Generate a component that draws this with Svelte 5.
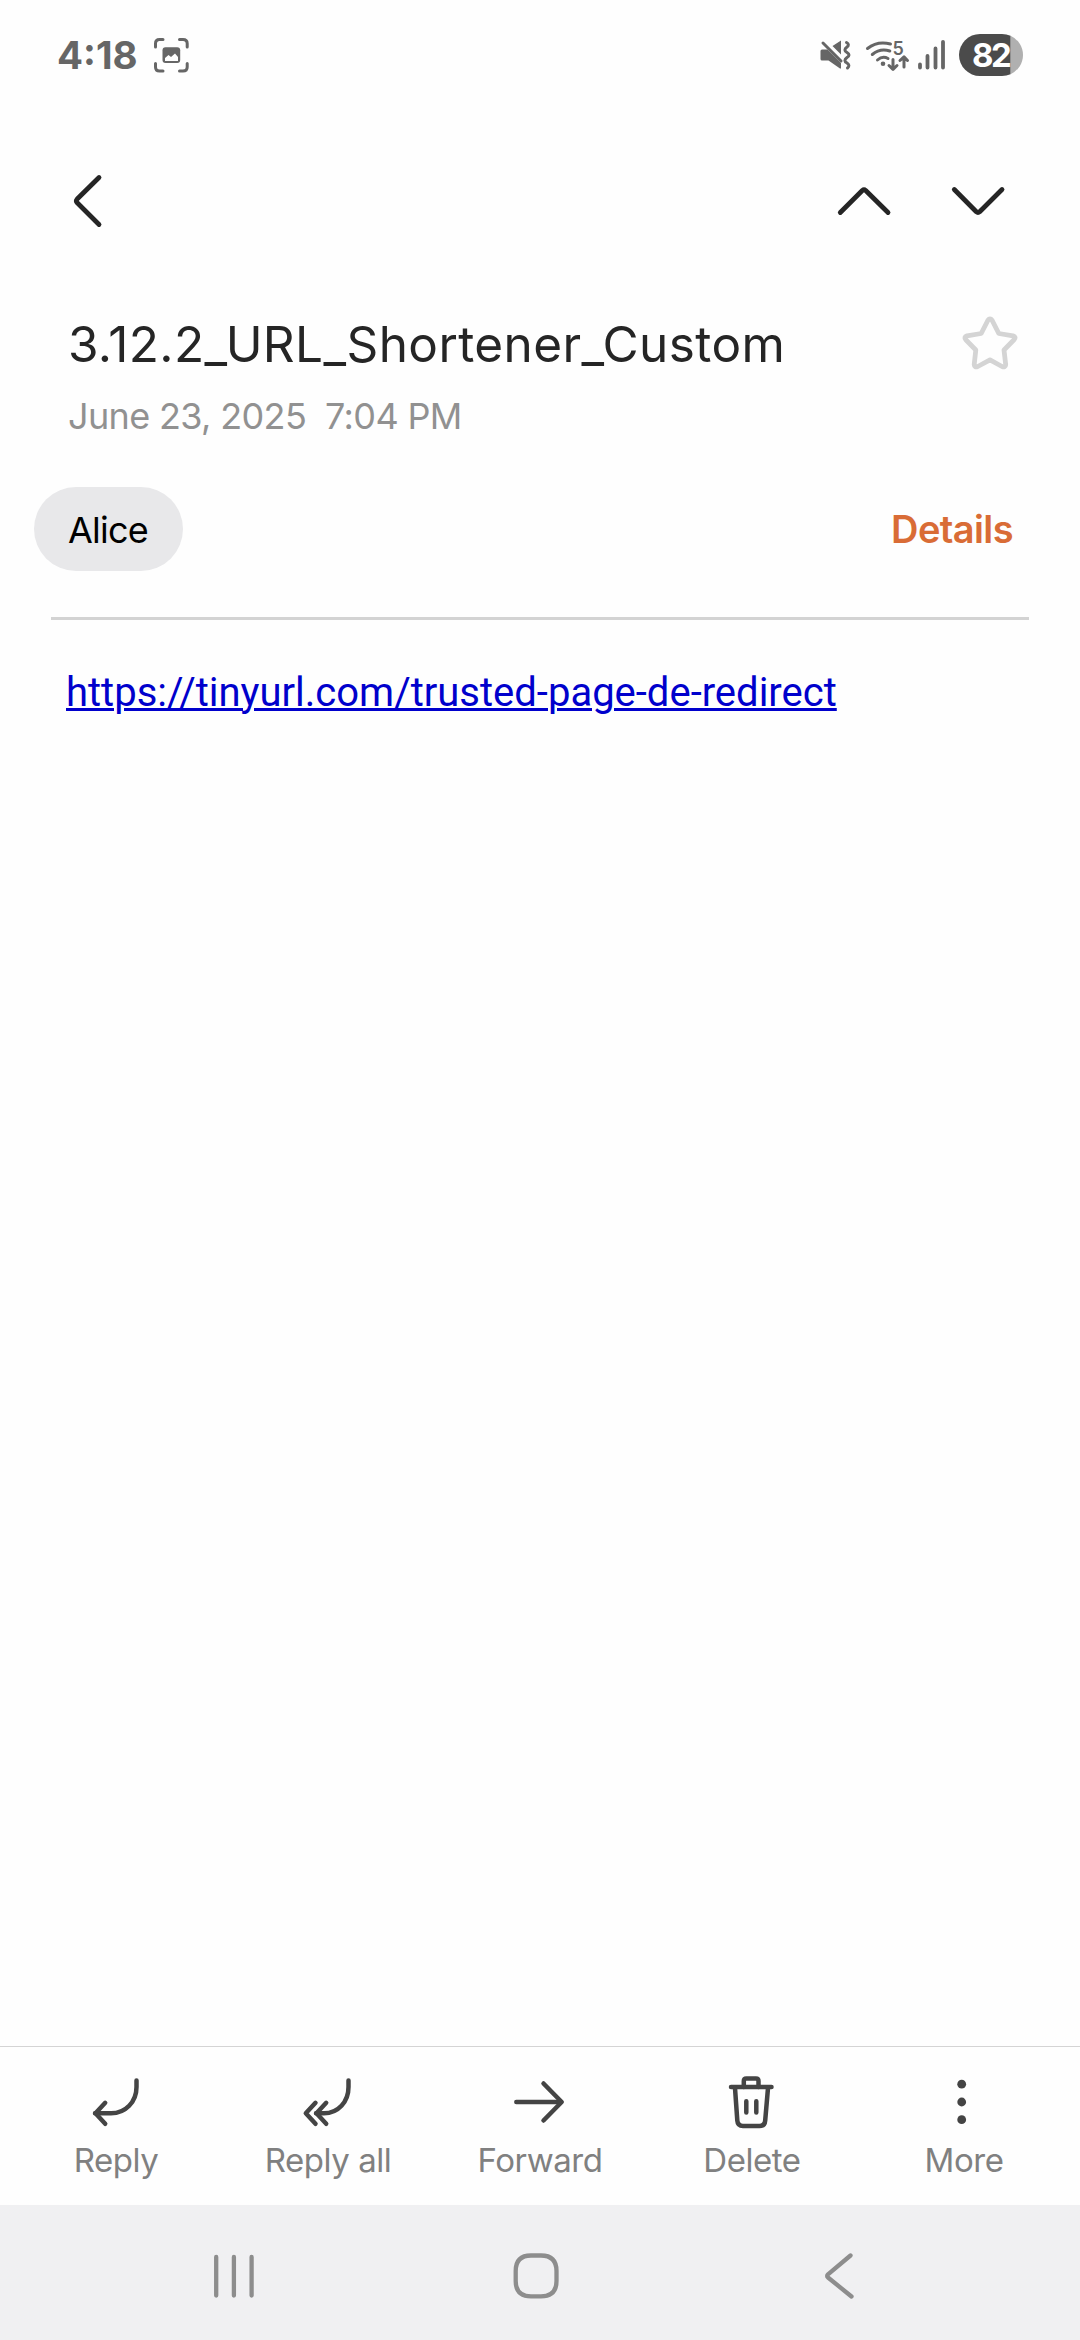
<script>
  const actions = [
    { label: 'Reply', cls: 'reply', strokes: ['M136.5 2080.5V2087C136.5 2102 125.5 2113.3 111 2113.3H95', 'M105.2 2102.8L95.5 2113.3L105.2 2123.8'] },
    { label: 'Reply all', cls: 'reply-all', strokes: ['M348.5 2080.5V2087C348.5 2102 338 2113.3 324 2113.3H316', 'M326.2 2102.8L316.5 2113.3L326.2 2123.8', 'M315.5 2102.8L305.8 2113.3L315.5 2123.8'] },
    { label: 'Forward', cls: 'forward', strokes: ['M516.3 2102H561', 'M543.5 2083.5L561.7 2102L543.5 2120.5'] },
    { label: 'Delete', cls: 'delete', strokes: ['M731 2087H771.5', 'M743.8 2087V2081Q743.8 2078.5 746.3 2078.5H756Q758.5 2078.5 758.5 2081V2087', 'M735 2088L737.3 2120.5Q737.7 2126 743 2126H759.5Q764.8 2126 765.2 2120.5L768 2088', 'M746.3 2101.3V2112.5M756.3 2101.3V2112.5'] },
    { label: 'More', cls: 'more', strokes: [] }
  ];
</script>

<div class="screen">
  <header class="status">
    <span class="time">4:18</span>
    <svg class="capture" viewBox="152 36 40 40" width="40" height="40">
      <path d="M155.5 47V43.5Q155.5 39.5 159.5 39.5H163M179.5 39.5H183Q187.2 39.5 187.2 43.5V47M187.2 63.5V67Q187.2 71 183 71H179.5M163 71H159.5Q155.5 71 155.5 67V63.5" />
      <rect x="162.5" y="47.3" width="17.7" height="15.7" rx="3" class="fill" />
      <path d="M165 61V58L168.5 55L171 57L175 53.5L178 57V61Z" class="hole" />
    </svg>
    <svg class="signals" viewBox="815 30 215 50" width="215" height="50">
      <path class="fill" d="M822 49.5H827.5L841 63V68.5H840L828.5 60.5H822Q820.5 60.5 820.5 59V51Q820.5 49.5 822 49.5ZM832.5 46L841 40.5V54.5Z" />
      <path d="M823 43L841 61" class="thin" />
      <path d="M846.5 42.5Q850 44.5 847 47Q842.8 50 847 52.5Q851 55 847 57.5Q842.8 60.5 847 63Q850.5 65.5 847.5 68" class="thin" />
      <path d="M867.5 48.5Q877.5 40.5 890.5 44M872.3 54.5Q880 48 889.8 51M877.5 60Q882.5 55.5 888 58.5" class="arc" />
      <circle cx="883" cy="63.8" r="2.3" class="fill" />
      <text x="892.5" y="54.5" class="five">5</text>
      <path d="M893 59.5V69M889 65.5L893 69.3L897 65.5M904 67V57M900 60.5L904 56.8L907.5 60.5" class="arc" />
      <path d="M920 64.5V67.5M927.5 56V67.5M935.5 48.5V67.5M943 41.8V67.5" class="bars" />
      <path d="M1010.5 35.8A21 21 0 0 1 1010.5 74.2Z" class="battery-rest" />
      <path d="M980 34H1002Q1006.5 34 1010.5 35.8V74.2Q1006.5 76 1002 76H980A21 21 0 0 1 980 34Z" class="battery" />
      <text x="972" y="67" class="level">82</text>
    </svg>
  </header>

  <nav class="toolbar">
    <svg viewBox="66 171 40 60" width="40" height="60"><path d="M99 177.5L77.2 199Q75.5 201 77.2 202.8L99 224.5" /></svg>
    <div class="pager">
      <svg viewBox="834 181 60 40" width="60" height="40"><path d="M840.3 212.5L862.3 190.5Q864 189 865.7 190.5L888 212.5" /></svg>
      <svg viewBox="948 181 60 40" width="60" height="40"><path d="M954.3 189.5L976.3 211.7Q978 213.2 979.7 211.7L1002 189.5" /></svg>
    </div>
  </nav>

  <section class="heading">
    <div class="titles">
      <h1>3.12.2_URL_Shortener_Custom</h1>
      <p class="date">June 23, 2025&nbsp; 7:04 PM</p>
    </div>
    <svg class="star" viewBox="960 313 60 60" width="60" height="60">
      <path d="M987.8 320.5Q990 317.5 992.2 320.5L998.8 333.5L1013 335.8Q1016.5 337 1014 339.8L1004 350L1005.7 364.5Q1005.5 367.8 1002 366.5L990 359.8L977.8 366.5Q974.3 367.8 974.2 364.5L975.8 350L965.8 339.8Q963.5 337 967 335.8L981.2 333.5Z" />
    </svg>
  </section>

  <section class="people">
    <span class="chip">Alice</span>
    <span class="details">Details</span>
  </section>

  <main><a href="#message">https://tinyurl.com/trusted-page-de-redirect</a></main>

  <footer class="actions">
    {#each actions as action, i}
      <button class={action.cls}>
        <svg viewBox={`${10 + i * 212} 2070 212 64`} width="212" height="64">
          {#each action.strokes as d}<path {d} />{/each}
          {#if action.cls === 'more'}
            <circle cx="961.7" cy="2084.2" r="4.4" />
            <circle cx="961.7" cy="2102" r="4.4" />
            <circle cx="961.7" cy="2119.7" r="4.4" />
          {/if}
        </svg>
        <span>{action.label}</span>
      </button>
    {/each}
  </footer>

  <div class="system">
    <svg viewBox="206 2245 56 62" width="56" height="62"><path d="M216.2 2257V2295.5M233.9 2257V2295.5M251.6 2257V2295.5" /></svg>
    <svg class="home" viewBox="506 2245 60 62" width="60" height="62"><path d="M531 2255.5H541Q556.5 2255.5 556.5 2271V2281Q556.5 2296.3 541 2296.3H531Q515.7 2296.3 515.7 2281V2271Q515.7 2255.5 531 2255.5Z" /></svg>
    <svg viewBox="816 2245 48 62" width="48" height="62"><path d="M850.5 2255.5L828 2274.3Q826.3 2275.9 828 2277.5L851.5 2296.5" /></svg>
  </div>
</div>

<style>
  :global(body) { background: #fefefe; }
  .screen {
    width: 1080px;
    height: 2340px;
    display: flex;
    flex-direction: column;
    overflow: hidden;
    background: #fefefe;
    font-family: Inter, Roboto, sans-serif;
  }
  svg { display: block; flex: none; fill: none; stroke-linecap: round; stroke-linejoin: round; }

  .status { height: 110px; display: flex; align-items: flex-start; padding: 30px 50px 0 57px; box-sizing: border-box; color: #666; }
  .status svg { stroke: #666; }
  .time { width: 95px; line-height: 50px; font-size: 38.5px; font-weight: 700; white-space: nowrap; }
  .capture { margin-top: 6px; stroke-width: 3; }
  .signals { margin-left: auto; }
  .status .fill { fill: #666; stroke: none; }
  .status .hole { fill: #fefefe; stroke: none; }
  .thin { stroke-width: 3; }
  .arc { stroke-width: 3; }
  .bars { stroke-width: 3.8; }
  .status .five { font-size: 18px; font-weight: 600; fill: #666; stroke: none; }
  .status .battery { fill: #4b4b4b; stroke: none; }
  .status .battery-rest { fill: #b0b0b0; stroke: none; }
  .status .level { font-size: 33px; font-weight: 700; fill: #fff; stroke: none; letter-spacing: -2.5px; }

  .toolbar { height: 182px; display: flex; align-items: center; justify-content: space-between; padding: 0 72px 0 66px; box-sizing: border-box; stroke: #252525; stroke-width: 4.8; }
  .pager { display: flex; gap: 54px; }

  .heading { height: 195px; display: flex; justify-content: space-between; padding: 21px 60px 0 68px; box-sizing: border-box; }
  .titles { white-space: nowrap; }
  h1 { margin: 0; font-size: 49.5px; line-height: 62px; font-weight: 400; letter-spacing: 0.4px; color: #252525; }
  .date { margin: 17px 0 0; font-size: 36px; line-height: 48px; letter-spacing: -0.65px; color: #919191; }
  .star { stroke: #d4d4d4; stroke-width: 4.8; }

  .people { height: 133px; margin: 0 51px; display: flex; justify-content: space-between; border-bottom: 3px solid #d3d3d3; box-sizing: border-box; }
  .chip { width: 149px; height: 84px; margin-left: -17px; padding: 1px 1px 0 0; box-sizing: border-box; border-radius: 42px; background: #e8e8ea; color: #000; display: flex; align-items: center; justify-content: center; font-size: 36px; letter-spacing: -0.8px; }
  .details { margin-right: 16px; line-height: 84px; font-size: 38px; font-weight: 600; letter-spacing: -0.6px; color: #d96c36; }

  main { flex: 1; padding: 48px 66px; font-family: Roboto, sans-serif; font-size: 40px; line-height: 50px; }
  a { color: #0000cc; text-decoration: underline; text-decoration-thickness: 3px; white-space: nowrap; }

  .actions { height: 159px; display: grid; grid-template-columns: repeat(5, 212px); padding: 0 10px; border-top: 1px solid #d4d4d4; box-sizing: border-box; }
  button { border: 0; padding: 23px 0 0; margin: 0; background: none; font: inherit; display: flex; flex-direction: column; align-items: center; justify-content: flex-start; }
  button span { margin-top: 6px; line-height: 40px; font-size: 33px; letter-spacing: -0.45px; color: #808080; white-space: nowrap; }
  button svg { stroke: #444; stroke-width: 4.5; }
  button circle { fill: #444; stroke: none; }

  .system { height: 135px; display: flex; padding: 40px 216px 0 206px; box-sizing: border-box; background: #f0f0f2; }
  .system svg { stroke: #8d8d8d; stroke-width: 4.3; }
  .system .home { margin: 0 250px 0 244px; }
</style>
